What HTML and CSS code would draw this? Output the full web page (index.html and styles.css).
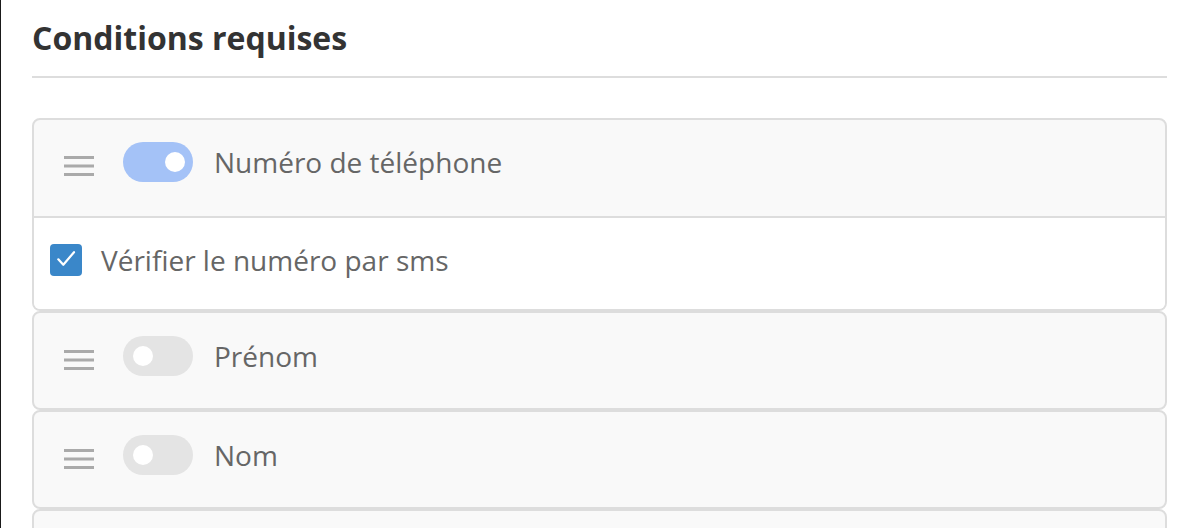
FILE: index.html
```html
<!DOCTYPE html>
<html lang="fr">
<head>
<meta charset="utf-8">
<title>Conditions requises</title>
<link rel="stylesheet" href="styles.css">
</head>
<body>
<div class="panel">
  <h2 class="title">Conditions requises</h2>
  <div class="list">
    <div class="card">
      <div class="card-head expanded">
        <svg class="drag" width="30" height="20" viewBox="0 0 30 20"><rect x="0" y="0" width="30" height="3"/><rect x="0" y="8.5" width="30" height="3"/><rect x="0" y="17" width="30" height="3"/></svg>
        <span class="toggle on"><span class="knob"></span></span>
        <span class="label">Numéro de téléphone</span>
      </div>
      <div class="card-body">
        <span class="checkbox"><svg width="32" height="32" viewBox="0 0 32 32"><path d="M8.3 15.3 L13.3 20.8 L24 8.2" fill="none" stroke="#fff" stroke-width="2.2" stroke-linecap="round" stroke-linejoin="round"/></svg></span>
        <span class="label">Vérifier le numéro par sms</span>
      </div>
    </div>
    <div class="card">
      <div class="card-head">
        <svg class="drag" width="30" height="20" viewBox="0 0 30 20"><rect x="0" y="0" width="30" height="3"/><rect x="0" y="8.5" width="30" height="3"/><rect x="0" y="17" width="30" height="3"/></svg>
        <span class="toggle"><span class="knob"></span></span>
        <span class="label">Prénom</span>
      </div>
    </div>
    <div class="card">
      <div class="card-head">
        <svg class="drag" width="30" height="20" viewBox="0 0 30 20"><rect x="0" y="0" width="30" height="3"/><rect x="0" y="8.5" width="30" height="3"/><rect x="0" y="17" width="30" height="3"/></svg>
        <span class="toggle"><span class="knob"></span></span>
        <span class="label">Nom</span>
      </div>
    </div>
    <div class="card">
      <div class="card-head">
        <svg class="drag" width="30" height="20" viewBox="0 0 30 20"><rect x="0" y="0" width="30" height="3"/><rect x="0" y="8.5" width="30" height="3"/><rect x="0" y="17" width="30" height="3"/></svg>
        <span class="toggle"><span class="knob"></span></span>
        <span class="label">Email</span>
      </div>
    </div>
  </div>
</div>
</body>
</html>
```
FILE: styles.css
```css
html, body {
  margin: 0;
  padding: 0;
  background: #fff;
  height: 100%;
  overflow: hidden;
}
body {
  font-family: "Open Sans", "Noto Sans", sans-serif;
}
.panel {
  border-left: 1px solid #1a1a1a;
  padding: 0 23px 0 31px;
  min-height: 100%;
  box-sizing: border-box;
}
.title {
  margin: 0;
  padding: 16px 0 16px;
  font-size: 32px;
  line-height: 44px;
  font-weight: 700;
  color: #333;
  border-bottom: 2px solid #ddd;
}
.list {
  margin-top: 40px;
  display: flex;
  flex-direction: column;
}
.card {
  border: 2px solid #ddd;
  border-radius: 8px;
  background: #f9f9f9;
  overflow: hidden;
}
.card-head {
  display: flex;
  align-items: center;
  padding: 23px 0 32px 30px;
}
.card-head.expanded {
  padding: 22px 0 34px 30px;
}
.drag {
  fill: #aaa;
  margin-top: 7px;
  flex: none;
}
.toggle {
  flex: none;
  width: 70px;
  height: 40px;
  border-radius: 20px;
  background: #e4e4e4;
  margin-left: 29px;
  display: flex;
  align-items: center;
  padding: 0 10px;
  box-sizing: border-box;
}
.toggle.on {
  background: #a4c2f7;
  justify-content: flex-end;
  padding: 0 8px;
}
.knob {
  width: 20px;
  height: 20px;
  border-radius: 50%;
  background: #fff;
}
.label {
  font-size: 28px;
  color: #666;
  line-height: 40px;
  white-space: nowrap;
}
.card-head .label {
  margin-left: 21px;
}
.card-body {
  background: #fff;
  border-top: 2px solid #ddd;
  display: flex;
  align-items: center;
  padding: 26px 0 33px 16px;
}
.checkbox {
  flex: none;
  width: 32px;
  height: 32px;
  border-radius: 4px;
  background: #3a87c9;
  display: block;
}
.checkbox svg {
  display: block;
}
.card-body .label {
  margin-left: 19px;
  line-height: 32px;
}
```
